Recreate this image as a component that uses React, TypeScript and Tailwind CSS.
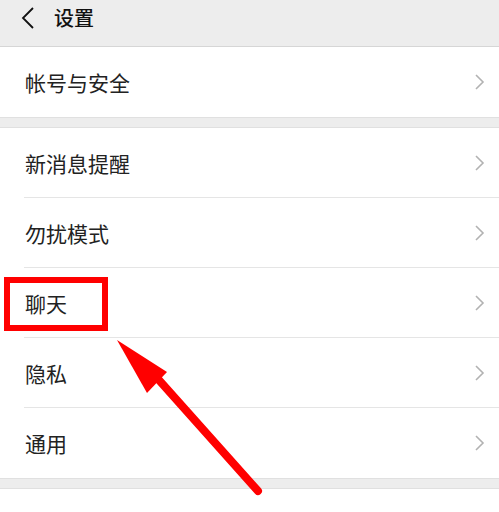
import React from "react";

const Chevron = () => (
  <svg width="12" height="18" viewBox="0 0 12 18" className="shrink-0">
    <path d="M3 2 L10 9 L3 16" fill="none" stroke="#b2b2b2" strokeWidth="1.6" strokeLinejoin="miter" />
  </svg>
);

const Row = ({ label, last }: { label: string; last?: boolean }) => (
  <div className="relative h-[70px] flex items-center justify-between pl-[25px] pr-[14px] bg-white">
    <span className="text-[21px] text-[#222] leading-none">{label}</span>
    <Chevron />
    {!last && <div className="absolute left-[24px] right-0 bottom-0 h-px bg-[#e5e5e5]" />}
  </div>
);

export default function App() {
  return (
    <div
      className="relative w-[499px] h-[512px] overflow-hidden bg-white"
      style={{ fontFamily: '"Noto Sans CJK SC", "Noto Sans", sans-serif' }}
    >
      <div className="h-[47px] bg-[#ededed] flex items-center pl-[20px] pb-[10px] border-b border-[#d6d6d6]">
        <svg width="16" height="24" viewBox="0 0 16 24">
          <path d="M13 2 L3 12 L13 22" fill="none" stroke="#111" strokeWidth="1.8" />
        </svg>
        <span className="ml-[18px] text-[20px] font-medium text-[#111] leading-none">设置</span>
      </div>
      <Row label="帐号与安全" last />
      <div className="h-[11px] bg-[#ededed] border-t border-b border-[#e0e0e0]" />
      <Row label="新消息提醒" />
      <Row label="勿扰模式" />
      <Row label="聊天" />
      <Row label="隐私" />
      <Row label="通用" last />
      <div className="h-[11px] bg-[#ededed] border-t border-b border-[#e0e0e0]" />

      <div className="absolute left-[4px] top-[277px] w-[104px] h-[54px] border-[6px] border-[#ff0000]" />
      <svg className="absolute left-0 top-0" width="499" height="512" viewBox="0 0 499 512">
        <line x1="258" y1="491" x2="150" y2="370" stroke="#ff0000" strokeWidth="8" strokeLinecap="round" />
        <polygon points="117,340 167,372 147,393" fill="#ff0000" />
      </svg>
    </div>
  );
}
